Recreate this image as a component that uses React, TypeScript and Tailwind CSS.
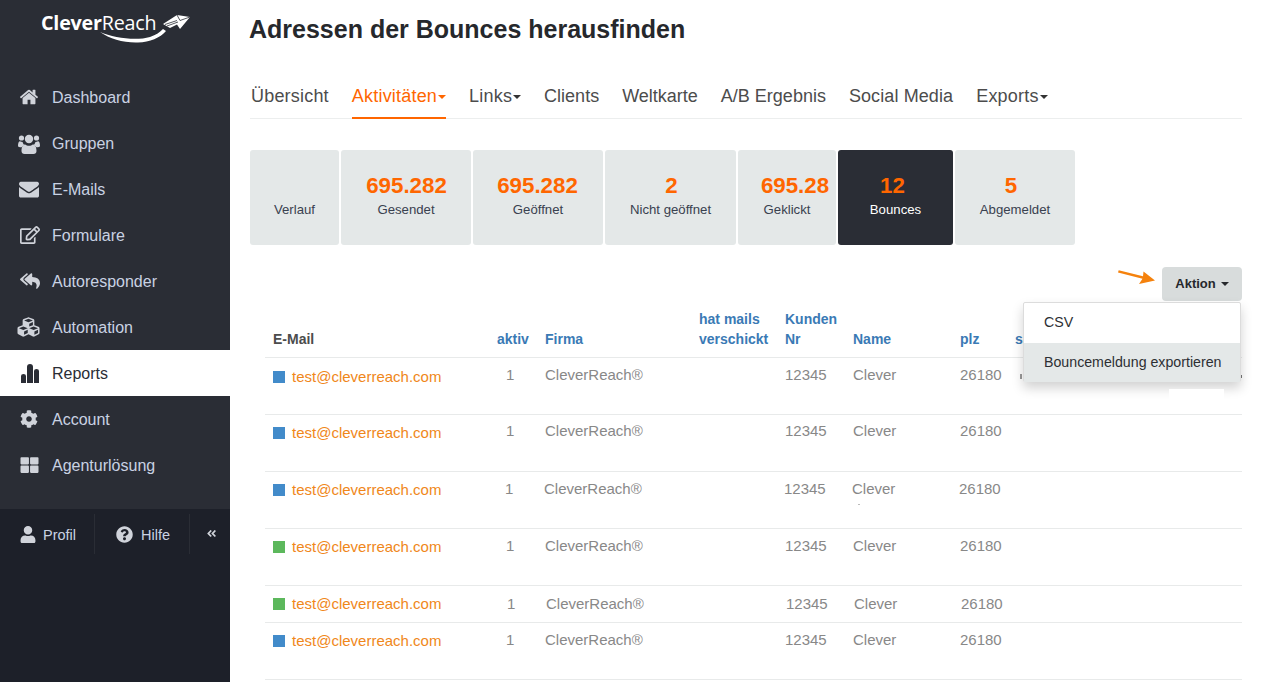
import { FaRegEdit, FaReplyAll, FaCubes, FaCog, FaThLarge, FaUser, FaQuestionCircle, FaAngleDoubleLeft } from 'react-icons/fa';

type IconProps = { className?: string };

const BarsIcon = ({ className }: IconProps) => (
  <svg className={className} viewBox="0 0 18 19" fill="currentColor">
    <path d="M0 12Q0 10 2.500 10T5 12V19H0z" />
    <path d="M6 3Q6 0 9 0t3 3V19H6z" />
    <path d="M13 7Q13 5 15.500 5T18 7V19H13z" />
  </svg>
);

const HomeIcon = ({ className }: IconProps) => (
  <svg className={className} viewBox="0 0 1792 1792" fill="currentColor">
    <path d="M1472 992v480q0 26-19 45t-45 19h-384v-384h-256v384h-384q-26 0-45-19t-19-45v-480q0-1 .5-3t.5-3l575-474 575 474q1 2 1 6zm223-69l-62 74q-8 9-21 11h-3q-13 0-21-7l-692-577-692 577q-12 8-24 7-13-2-21-11l-62-74q-8-10-7-23.500t11-21.500l719-599q32-26 76-26t76 26l244 204v-195q0-14 9-23t23-9h192q14 0 23 9t9 23v408l219 182q10 8 11 21.500t-7 23.500z" />
  </svg>
);

const EnvelopeIcon = ({ className }: IconProps) => (
  <svg className={className} viewBox="0 0 1792 1792" fill="currentColor">
    <path d="M1792 710v794q0 66-47 113t-113 47h-1472q-66 0-113-47t-47-113v-794q44 49 101 87 362 246 497 345 57 42 92.500 65.500t94.500 48 110 24.500h2q51 0 110-24.500t94.500-48 92.500-65.500q170-123 498-345 57-39 100-87zm0-294q0 79-49 151t-122 123q-376 261-468 325-10 7-42.500 30.500t-54 38-52 32.500-57.500 27-50 9h-2q-23 0-50-9t-57.500-27-52-32.500-54-38-42.500-30.500q-91-64-262-182.500t-205-142.500q-62-42-117-115.500t-55-136.500q0-78 41.500-130t118.500-52h1472q65 0 112.500 47t47.500 113z" />
  </svg>
);

const UsersIcon = ({ className }: IconProps) => (
  <svg className={className} viewBox="0 0 22 21" fill="currentColor">
    <circle cx="3.500" cy="5" r="2.600" />
    <circle cx="18.500" cy="5" r="2.600" />
    <circle cx="11" cy="6" r="4.200" />
    <path d="M0 13c0-3 .8-4.800 2-4.800.8.500 1.500.8 2.600.8.300 1.400 1 2.500 1.800 3.200-1.200.3-2.100 1-2.700 2H2c-1.200 0-2-.5-2-1.200z" />
    <path d="M22 13c0-3-.8-4.800-2-4.800-.8.500-1.500.8-2.600.8-.3 1.400-1 2.500-1.800 3.200 1.200.3 2.100 1 2.700 2H20c1.200 0 2-.5 2-1.200z" />
    <path d="M7.200 11.500c1 .8 2.300 1.300 3.800 1.300s2.800-.5 3.800-1.300c2.200 0 3.700 2.300 3.700 6.500 0 1.900-1.200 3-3 3H6.500c-1.800 0-3-1.100-3-3 0-4.200 1.500-6.500 3.700-6.500z" />
  </svg>
);

const navItems = [
  { label: 'Dashboard', icon: HomeIcon, cls: 'w-[20px] h-[20px] -ml-px' },
  { label: 'Gruppen', icon: UsersIcon, cls: 'w-[22px] h-[21px] -ml-[2px]' },
  { label: 'E-Mails', icon: EnvelopeIcon, cls: 'w-[20px] h-[20px] -ml-px' },
  { label: 'Formulare', icon: FaRegEdit, cls: 'w-[20px] h-[18px]' },
  { label: 'Autoresponder', icon: FaReplyAll, cls: 'w-[20px] h-[18px]' },
  { label: 'Automation', icon: FaCubes, cls: 'w-[25px] h-[22px] -ml-[4px]' },
  { label: 'Reports', icon: BarsIcon, cls: 'w-[18px] h-[19px] ml-px', active: true },
  { label: 'Account', icon: FaCog, cls: 'w-[18px] h-[18px]' },
  { label: 'Agenturlösung', icon: FaThLarge, cls: 'w-[19px] h-[18px]' },
];

const tabs = [
  { label: 'Übersicht', track: 'tracking-[0.2px]' },
  { label: 'Aktivitäten', track: 'tracking-[0.2px]', caret: true, active: true },
  { label: 'Links', track: 'tracking-[0.2px]', caret: true },
  { label: 'Clients', track: '' },
  { label: 'Weltkarte', track: '' },
  { label: 'A/B Ergebnis', track: '' },
  { label: 'Social Media', track: 'tracking-[0.1px]' },
  { label: 'Exports', track: 'tracking-[0.2px]', caret: true },
];

const tiles = [
  { label: 'Verlauf', w: 'w-[89px]', num: '' },
  { value: '695.282', label: 'Gesendet', w: 'w-[130px]', num: 'ml-[1px]' },
  { value: '695.282', label: 'Geöffnet', w: 'w-[130px]', num: 'ml-[-1px]' },
  { value: '2', label: 'Nicht geöffnet', w: 'w-[131px]', num: 'ml-[2px]' },
  { value: '695.28', label: 'Geklickt', w: 'w-[98px]', num: 'ml-[16px]' },
  { value: '12', label: 'Bounces', w: 'w-[115px]', num: 'ml-[-6px]', active: true },
  { value: '5', label: 'Abgemeldet', w: 'w-[120px]', num: 'ml-[-8px]' },
];

// rows are not quite aligned in the original, so each carries its own offsets
const rows = [
  { color: 'bg-[#428bca]', h: 'h-[57px]', pt: 'pt-[9px]', mt: '-mt-[2px]', dx: 'ml-0' },
  { color: 'bg-[#428bca]', h: 'h-[57px]', pt: 'pt-[8px]', mt: '-mt-[2px]', dx: 'ml-0' },
  { color: 'bg-[#428bca]', h: 'h-[57px]', pt: 'pt-[8px]', mt: '-mt-[1px]', dx: '-ml-[1px]' },
  { color: 'bg-[#5cb85c]', h: 'h-[57px]', pt: 'pt-[8px]', mt: '-mt-[1px]', dx: 'ml-0' },
  { color: 'bg-[#5cb85c]', h: 'h-[37px]', pt: 'pt-[8px]', mt: 'mt-0', dx: 'ml-[1px]' },
  { color: 'bg-[#428bca]', h: 'h-[57px]', pt: 'pt-[8px]', mt: '-mt-[1px]', dx: 'ml-0' },
];

const gridCols = 'grid grid-cols-[232px_48px_154px_86px_68px_107px_55px_1fr]';

function Caret({ className }: { className?: string }) {
  return <span className={`inline-block w-0 h-0 border-x-[4px] border-x-transparent border-t-[4px] ${className}`} />;
}

function Logo() {
  return (
    <div className="relative w-[170px] h-[50px]">
      <span className="absolute left-[11px] top-[6px] text-[19.700px] leading-[24px] text-white font-['Open_Sans',sans-serif] tracking-[-0.2px]"><b>Clever</b>Reach</span>
      <svg className="absolute left-0 top-0 w-[170px] h-[50px]" viewBox="0 0 170 50" fill="#fff">
        <path d="M70 27C84 33 106 36 120 32 126 30 130 27 133 24L136 26C130 33 120 37 108 37.500 94 38 80 34 70 27z" />
        <path d="M133 19L147 10 160 12 150 24 147 19.500 140 23z" />
        <path d="M147 10L150 15.500 160 12M135 19.500L147 15.500M137 21L148 17" fill="none" stroke="#2a2d35" strokeWidth="0.8" />
      </svg>
    </div>
  );
}

export default function App() {
  return (
    <div className="flex h-[682px] overflow-hidden bg-white font-['Liberation_Sans',Arial,sans-serif]">
      <aside className="w-[230px] shrink-0 flex flex-col bg-[#2a2d35]">
        <div className="h-[74px] pt-[5px] pl-[30px]">
          <Logo />
        </div>
        <nav className="h-[435px]">
          {navItems.map(({ label, icon: Icon, cls, active }) => (
            <div key={label} className={`h-[46px] flex items-center pl-[20px] pt-[2px] text-[16px] ${active ? 'bg-white text-[#2a2d35]' : 'text-[#c9d2e3]'}`}>
              <span className="w-[32px] flex items-center -mt-[2px]">
                <Icon className={`${cls} ${active ? 'text-[#2a2d35]' : 'text-[#d0d3da]'}`} />
              </span>
              {label}
            </div>
          ))}
        </nav>
        <div className="flex-1 bg-[#1d2029] pt-[5px] text-[14.5px] text-[#c9d2e3]">
          <div className="h-[40px] flex items-center">
            <div className="w-[95px] h-full flex items-center pl-[20px] pt-[4px] gap-[7px] border-r border-[#2a2d35]">
              <FaUser className="w-[16px] h-[17px] -mt-[3px] text-[#d0d3da]" />
              Profil
            </div>
            <div className="w-[95px] h-full flex items-center pl-[21px] pt-[4px] gap-[8px] border-r border-[#2a2d35]">
              <FaQuestionCircle className="w-[17px] h-[17px] -mt-[3px] text-[#d0d3da]" />
              Hilfe
            </div>
            <FaAngleDoubleLeft className="w-[11px] h-[11px] ml-[16px] -mt-[2px] text-[#d0d3da]" />
          </div>
        </div>
      </aside>

      <main className="flex-1 pl-[19px] pr-[35px] relative">
        <h1 className="pt-[14px] h-[62px] text-[25px] leading-[30px] font-bold text-[#26282c]">Adressen der Bounces herausfinden</h1>
        <div className="ml-px h-[57px] flex gap-[23px] pl-px items-end border-b border-[#eceeee] text-[18px]">
          {tabs.map((t) => (
            <div key={t.label} className={`h-[40px] leading-[24px] flex items-start ${t.track} ${t.active ? 'pt-[5px] border-b-2 border-[#ff6600] text-[#ff6600] -mb-px' : 'pt-[6px] text-[#4c4c4c]'}`}>
              {t.label}
              {t.caret && <Caret className={`mt-[11px] ml-[1px] ${t.active ? 'border-t-[#ff6600]' : 'border-t-[#333]'}`} />}
            </div>
          ))}
        </div>

        <div className="mt-[31px] ml-px flex gap-[2px]">
          {tiles.map((t) => (
            <div key={t.label} className={`${t.w} h-[95px] rounded-[3px] flex flex-col items-center ${t.active ? 'bg-[#2a2d35] text-white' : 'bg-[#e4e8e8] text-[#39414f]'}`}>
              <div className={`h-[50px] pt-[23px] leading-[26px] text-[22.300px] font-bold text-[#ff6600] ${t.num}`}>{t.value}</div>
              <div className="mt-[2px] text-[13.200px] leading-[16px]">{t.label}</div>
            </div>
          ))}
        </div>

        <div className="mt-[22px] h-[34px] flex justify-end items-center relative">
          <svg className="absolute left-[869px] top-[3px] w-[40px] h-[20px]" viewBox="0 0 40 20" fill="#f5820d">
            <path d="M0 2.500L.7 .3 25 6.200 25.500 1.500 37 10.500 21 14 24.500 8.800z" />
          </svg>
          <button className="w-[80px] h-[34px] rounded-[4px] bg-[#d8dcdc] text-[13px] font-bold text-[#26282c] flex items-center justify-center gap-[5px]">
            Aktion
            <Caret className="border-t-[#26282c]" />
          </button>
        </div>

        <div className="ml-[16px] text-[15px] text-[#888]">
          <div className={`${gridCols} h-[57px] items-end pb-[8px] border-b border-[#e8eaea] text-[14px] leading-[20px] font-bold text-[#3a7ab5]`}>
            <div className="pl-[8px] text-[#4c4c4c]">E-Mail</div>
            <div>aktiv</div>
            <div>Firma</div>
            <div className="whitespace-nowrap">hat mails<br />verschickt</div>
            <div>Kunden<br />Nr</div>
            <div>Name</div>
            <div>plz</div>
            <div>s</div>
          </div>
          {rows.map((r, i) => (
            <div key={i} className={`${gridCols} ${r.h} ${r.pt} border-b border-[#e8eaea] leading-[20px]`}>
              <div className="pl-[8px] flex items-center h-[20px] text-[#f0871a] whitespace-nowrap">
                <span className={`w-[12px] h-[12px] mr-[7px] ${r.color}`} />
                test@cleverreach.com
              </div>
              <div className={`${r.mt} ${r.dx} pl-[9px]`}>1</div>
              <div className={`${r.mt} ${r.dx}`}>CleverReach®</div>
              <div />
              <div className={`${r.mt} ${r.dx}`}>12345</div>
              <div className={`${r.mt} ${r.dx}`}>Clever</div>
              <div className={`${r.mt} ${r.dx}`}>26180</div>
              <div />
            </div>
          ))}
        </div>

        <div className="absolute left-[790px] top-[374px] w-[2px] h-[5px] bg-[#999]" />
        <div className="absolute left-[1011px] top-[375px] w-[1px] h-[3px] bg-[#777]" />
        <div className="absolute left-[628px] top-[504px] w-[2px] h-[1px] bg-[#bbb]" />
        <div className="absolute left-[793px] top-[302px] w-[218px] h-[80px] bg-white rounded-[2px] border border-[#dcdcdc] shadow-[0_6px_12px_rgba(0,0,0,0.18)] text-[14.200px] leading-[20px] text-[#2d2f33]">
          <div className="h-[40px] pl-[20px] pb-[2px] flex items-center">CSV</div>
          <div className="h-[39px] pl-[20px] pb-[2px] flex items-center bg-[#e4e8e8]">Bouncemeldung exportieren</div>
        </div>
        <div className="absolute left-[939px] top-[389px] w-[55px] h-[12px] bg-white" />
      </main>
    </div>
  );
}
